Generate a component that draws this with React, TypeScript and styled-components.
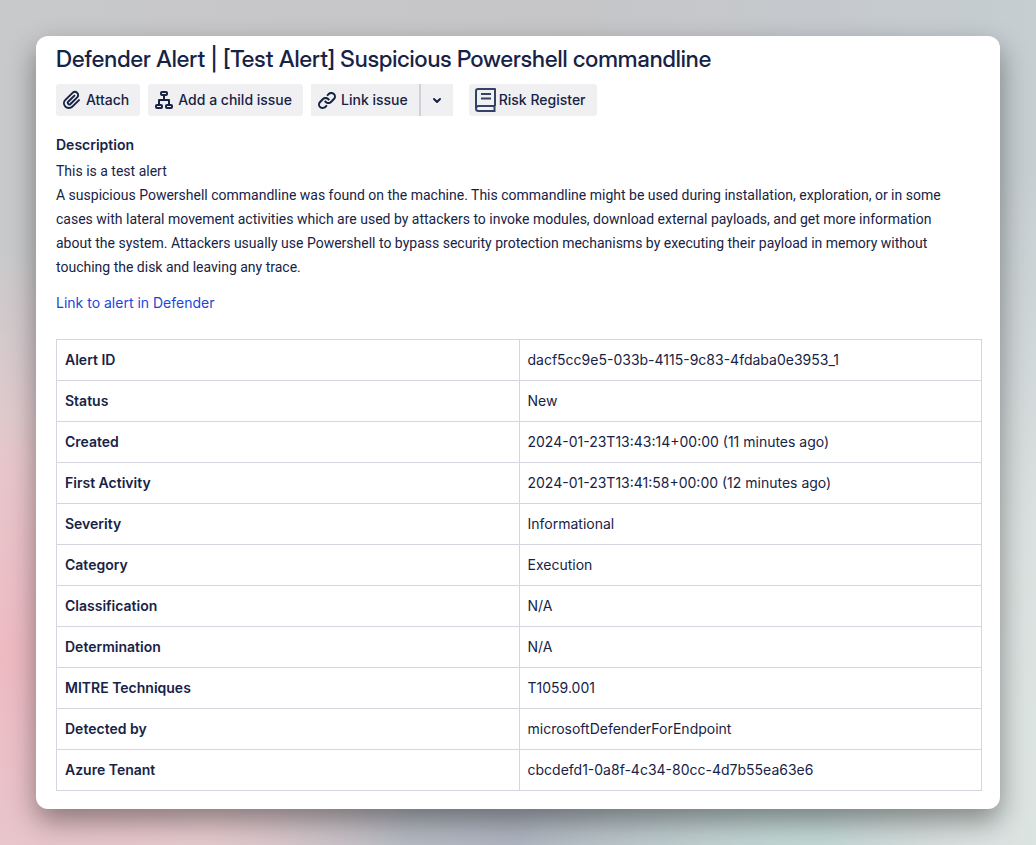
import React from "react";
import styled, { createGlobalStyle } from "styled-components";

const GlobalStyle = createGlobalStyle`
  * { box-sizing: border-box; }
  body {
    margin: 0;
    color: #172346;
    font-family: Inter, "Liberation Sans", sans-serif;
    font-size: 14px;
    line-height: 24px;
  }
`;

const Backdrop = styled.div`
  min-height: 100vh;
  padding: 36px;
  background:
    radial-gradient(ellipse 280px 240px at 0% 78%, #eebac2 0%, rgba(238, 186, 194, 0) 100%),
    radial-gradient(ellipse 420px 480px at 0% 86%, #e5c9cd 0%, #e5c9cd 55%, rgba(229, 201, 205, 0) 100%),
    radial-gradient(ellipse 260px 620px at 104% 92%, #dde6e3 0%, #dae0df 45%, rgba(216, 220, 220, 0) 100%),
    radial-gradient(ellipse 300px 240px at 78% 100%, #c2d8d5 0%, rgba(194, 216, 213, 0) 100%),
    radial-gradient(ellipse 340px 240px at 50% 100%, #adb4c0 0%, rgba(173, 180, 192, 0) 100%),
    linear-gradient(90deg, #c8c9cb 0%, #c6c5c7 50%, #c5c9cd 80%, #c5ced1 100%);
`;

const Card = styled.main`
  padding: 8px 18px 18px 20px;
  border-radius: 12px;
  background: #ffffff;
  box-shadow: 0 12px 28px rgba(0, 0, 0, 0.4);
`;

const Title = styled.h1`
  margin: 0 0 10px;
  font-family: "Inter Display", Inter, sans-serif;
  font-size: 23px;
  font-weight: 500;
  line-height: 30px;
`;

const Toolbar = styled.div`
  display: flex;
  flex-wrap: wrap;
  gap: 8px;
`;

const ActionButton = styled.button`
  display: flex;
  align-items: center;
  gap: 2px;
  height: 32px;
  padding: 0 11px 0 4px;
  border: 0;
  border-radius: 3px;
  background: #f0f0f2;
  color: inherit;
  font: inherit;
  font-weight: 500;
`;

const SplitButton = styled.div`
  display: flex;
  gap: 2px;
  margin-right: 8px;
  border-radius: 3px;
  background: #cfd0d8;

  & > button:first-child { border-radius: 3px 0 0 3px; }
  & > button:last-child {
    justify-content: center;
    width: 32px;
    padding: 0;
    border-radius: 0 3px 3px 0;
  }
`;

const Icon = styled.svg`
  display: block;
  flex: none;
  width: 24px;
  height: 24px;
`;

const LineIcon = styled(Icon)`
  fill: none;
  stroke: currentColor;
  stroke-width: 2;
  stroke-linejoin: round;
`;

const SectionTitle = styled.h2`
  margin: 17px 0 2px;
  font-size: 14px;
  font-weight: 600;
  line-height: 24px;
`;

const Paragraph = styled.p`
  margin: 0 0 12px;
`;

const AlertText = styled(Paragraph)`
  padding-right: 16px;
  font-family: Roboto, Inter, sans-serif;
`;

const AlertLink = styled.a`
  color: #1d45dc;
  text-decoration: none;
`;

const DetailsTable = styled.table`
  width: 100%;
  margin-top: 24px;
  border-collapse: collapse;
  table-layout: fixed;

  th, td {
    height: 41px;
    padding: 8px;
    border: 1px solid #d5d7e0;
    line-height: 24px;
    text-align: left;
  }
  th { font-weight: 600; }
`;

const details = [
  ["Alert ID", "dacf5cc9e5-033b-4115-9c83-4fdaba0e3953_1"],
  ["Status", "New"],
  ["Created", "2024-01-23T13:43:14+00:00 (11 minutes ago)"],
  ["First Activity", "2024-01-23T13:41:58+00:00 (12 minutes ago)"],
  ["Severity", "Informational"],
  ["Category", "Execution"],
  ["Classification", "N/A"],
  ["Determination", "N/A"],
  ["MITRE Techniques", "T1059.001"],
  ["Detected by", "microsoftDefenderForEndpoint"],
  ["Azure Tenant", "cbcdefd1-0a8f-4c34-80cc-4d7b55ea63e6"],
];

const AttachIcon = () => (
  <Icon viewBox="0 0 24 24" fill="currentColor" aria-hidden="true">
    <path
      fillRule="evenodd"
      d="M11.643 17.965c-1.53 1.495-4.016 1.496-5.542.004a3.773 3.773 0 0 1 .002-5.412l7.147-6.985a2.316 2.316 0 0 1 3.233-.003c.893.873.895 2.282.004 3.154l-6.703 6.55a.653.653 0 0 1-.914-.008.62.62 0 0 1 .001-.89l6.229-6.087a.941.941 0 0 0 0-1.353.995.995 0 0 0-1.384 0l-6.23 6.087a2.502 2.502 0 0 0 0 3.596 2.643 2.643 0 0 0 3.683.009l6.703-6.551a4.074 4.074 0 0 0-.003-5.859 4.306 4.306 0 0 0-6.002.003l-7.148 6.985a5.655 5.655 0 0 0-.001 8.118c2.29 2.239 6.015 2.238 8.31-.005l6.686-6.533a.941.941 0 0 0 0-1.353.995.995 0 0 0-1.384 0l-6.687 6.533z"
    />
  </Icon>
);

const ChildIcon = () => (
  <LineIcon viewBox="0 0 24 24" aria-hidden="true">
    <rect x="9" y="4" width="6" height="3" rx="1" />
    <rect x="4" y="17" width="6" height="3" rx="1" />
    <rect x="14" y="17" width="6" height="3" rx="1" />
    <path d="M12 7v5M7 17v-5h10v5" />
  </LineIcon>
);

const LinkIcon = () => (
  <Icon viewBox="0 0 24 24" fill="currentColor" aria-hidden="true">
    <path d="M12.856 5.457l-.937.92a1.002 1.002 0 0 0 0 1.437 1.047 1.047 0 0 0 1.463 0l.984-.966c.967-.95 2.542-1.135 3.602-.288a2.54 2.54 0 0 1 .203 3.81l-2.903 2.852a2.646 2.646 0 0 1-3.696 0l-1.11-1.09L9 13.57l1.108 1.089c1.822 1.788 4.802 1.788 6.622 0l2.905-2.852a4.558 4.558 0 0 0-.357-6.82c-1.893-1.517-4.695-1.226-6.422.47" />
    <path d="M11.144 19.543l.937-.92a1.002 1.002 0 0 0 0-1.437 1.047 1.047 0 0 0-1.462 0l-.985.966c-.967.95-2.542 1.135-3.602.288a2.54 2.54 0 0 1-.203-3.81l2.903-2.852a2.646 2.646 0 0 1 3.696 0l1.11 1.09L15 11.43l-1.108-1.089c-1.822-1.788-4.802-1.788-6.622 0l-2.905 2.852a4.558 4.558 0 0 0 .357 6.82c1.893 1.517 4.695 1.226 6.422-.47" />
  </Icon>
);

const ChevronIcon = () => (
  <LineIcon viewBox="0 0 24 24" strokeLinecap="round" aria-hidden="true">
    <path d="M9 11l3 3 3-3" />
  </LineIcon>
);

const BookIcon = () => (
  <LineIcon viewBox="0 0 24 24" color="#344266" aria-hidden="true">
    <path d="M22 18V1H5a2 2 0 0 0-2 2v17.500a2.500 2.500 0 0 0 2.500 2.500H22.500M22 18H5.500A2.500 2.500 0 0 0 3 20.500M21.500 18v5" />
    <path d="M8 6h10M8 10.500h10" />
  </LineIcon>
);

export default function App() {
  return (
    <>
      <GlobalStyle />
      <Backdrop>
        <Card>
          <Title>Defender Alert | [Test Alert] Suspicious Powershell commandline</Title>
          <Toolbar>
            <ActionButton type="button"><AttachIcon />Attach</ActionButton>
            <ActionButton type="button"><ChildIcon />Add a child issue</ActionButton>
            <SplitButton>
              <ActionButton type="button"><LinkIcon />Link issue</ActionButton>
              <ActionButton type="button" aria-label="More link options"><ChevronIcon /></ActionButton>
            </SplitButton>
            <ActionButton type="button"><BookIcon />Risk Register</ActionButton>
          </Toolbar>
          <SectionTitle>Description</SectionTitle>
          <AlertText>
            This is a test alert
            <br />
            A suspicious Powershell commandline was found on the machine. This commandline might be used during installation, exploration, or in some cases with lateral movement activities which are used by attackers to invoke modules, download external payloads, and get more information about the system. Attackers usually use Powershell to bypass security protection mechanisms by executing their payload in memory without touching the disk and leaving any trace.
          </AlertText>
          <Paragraph><AlertLink href="#alert">Link to alert in Defender</AlertLink></Paragraph>
          <DetailsTable>
            <tbody>
              {details.map(([label, value]) => (
                <tr key={label}>
                  <th scope="row">{label}</th>
                  <td>{value}</td>
                </tr>
              ))}
            </tbody>
          </DetailsTable>
        </Card>
      </Backdrop>
    </>
  );
}
